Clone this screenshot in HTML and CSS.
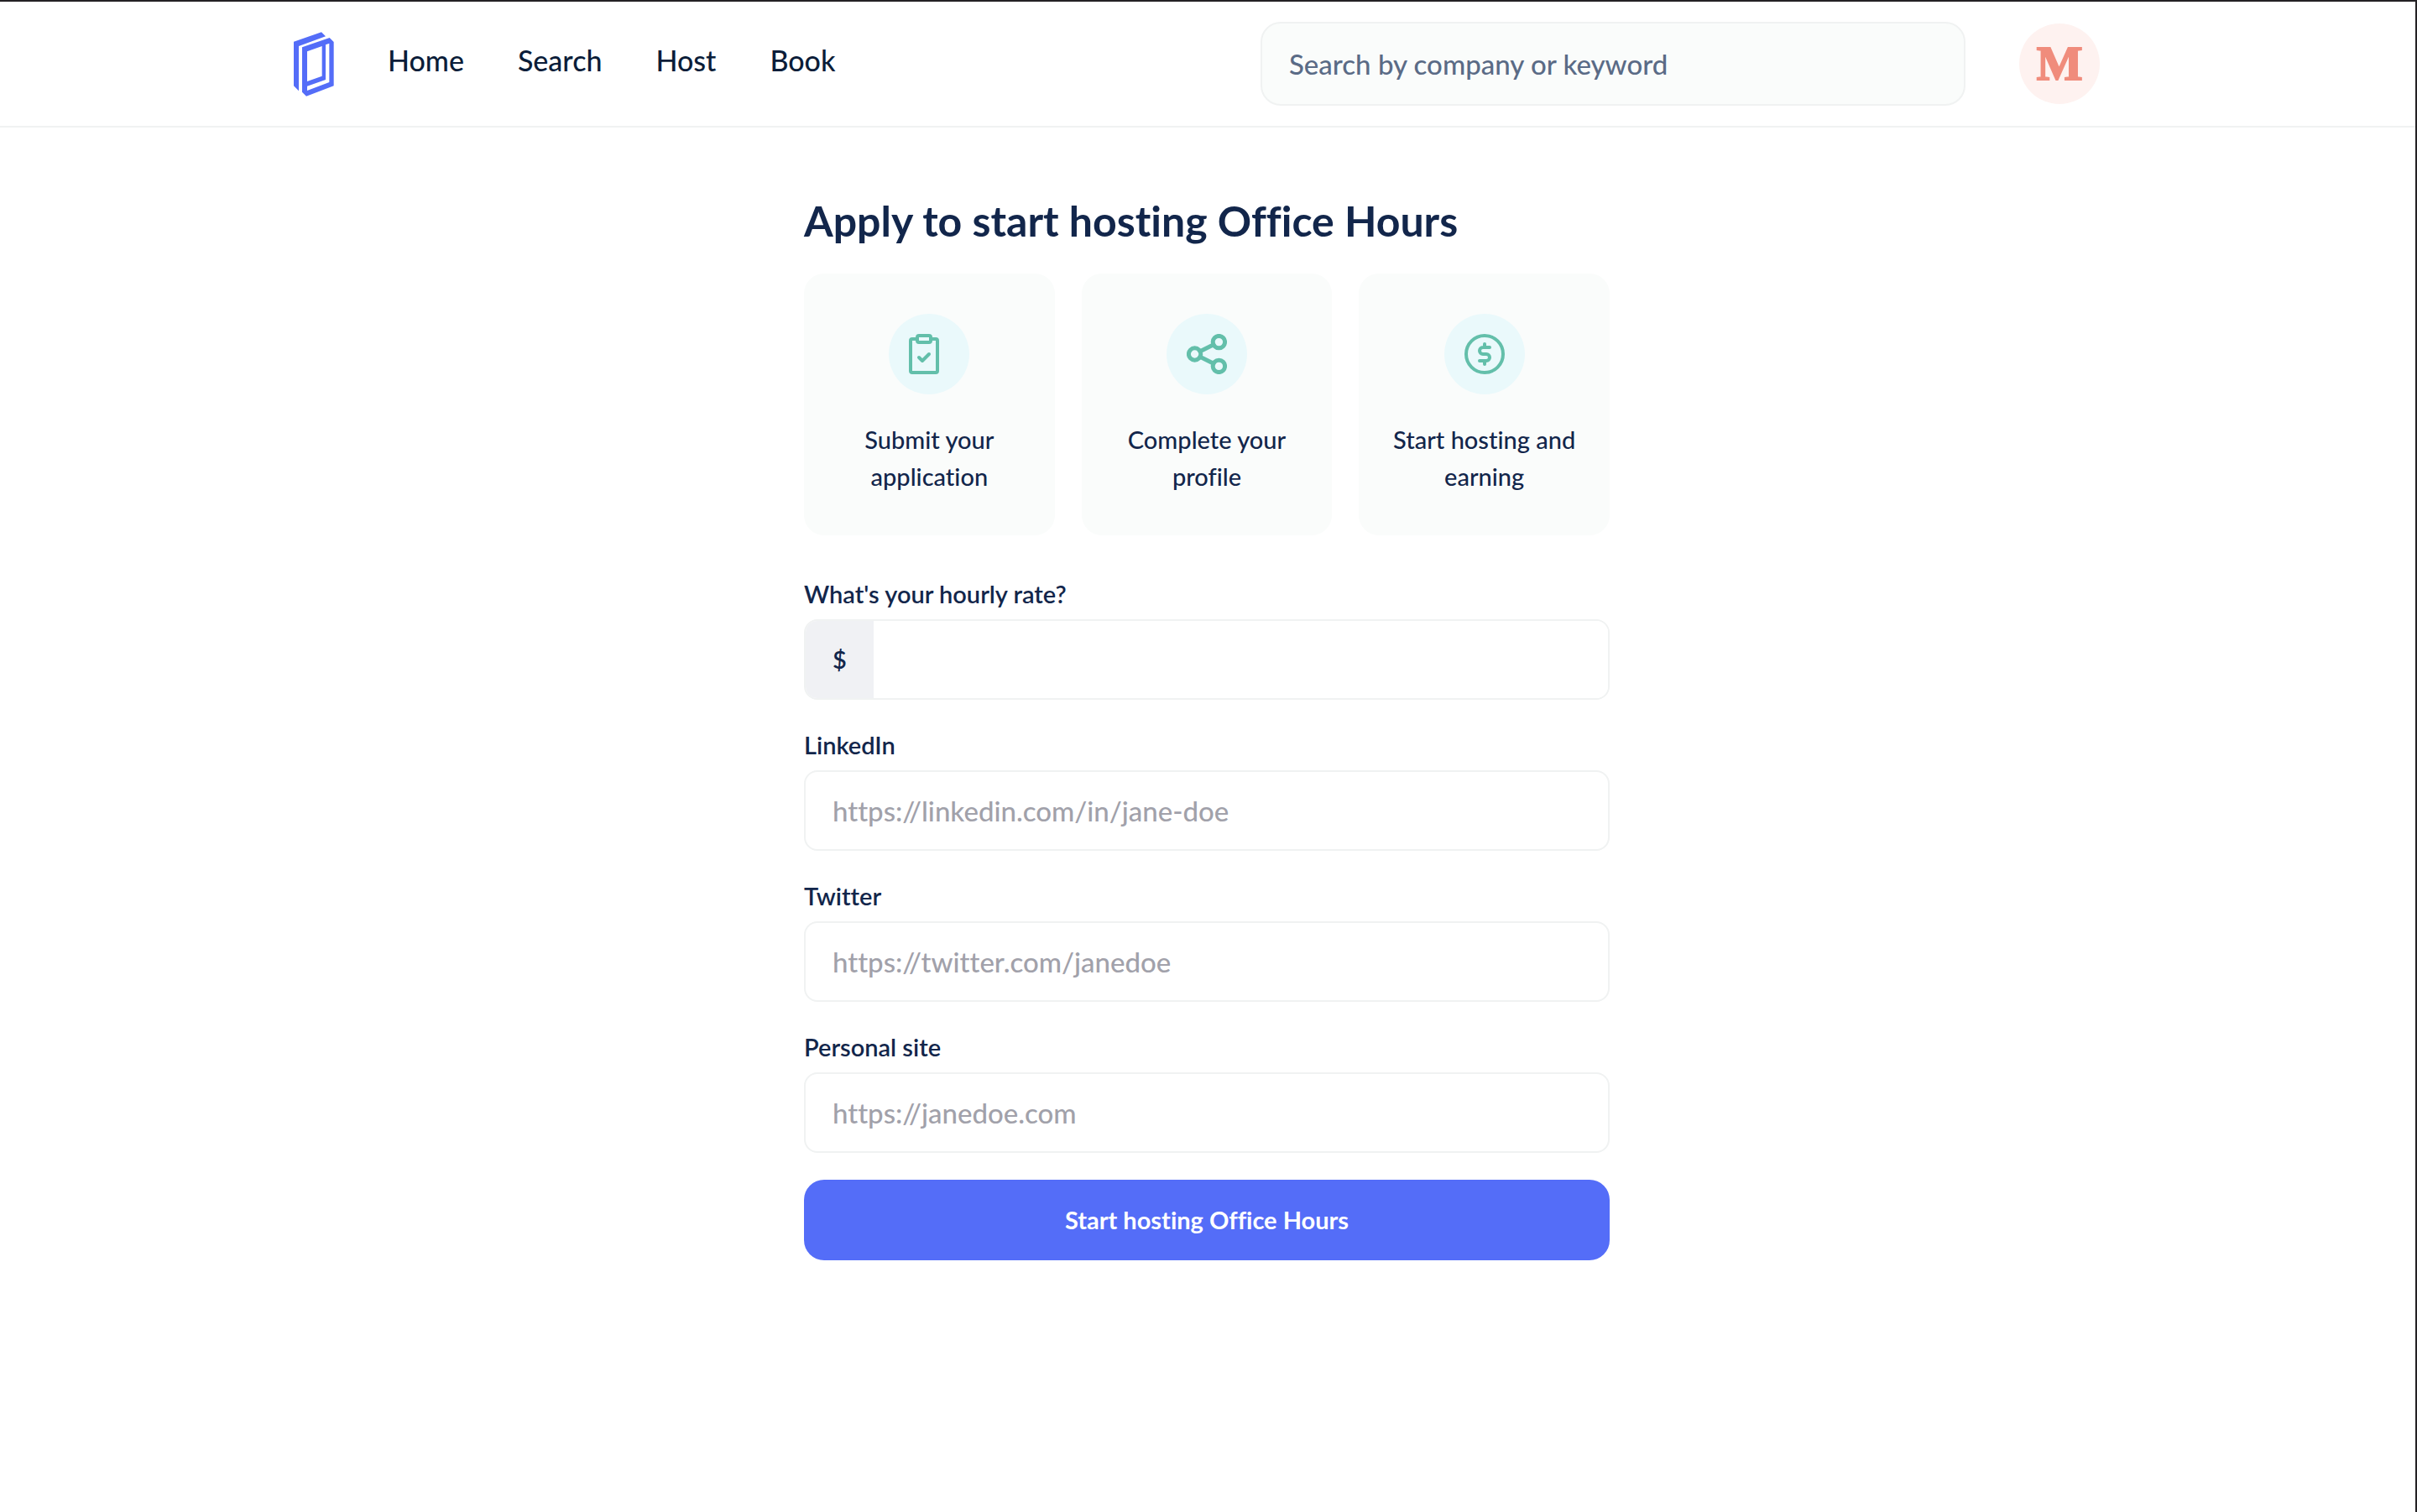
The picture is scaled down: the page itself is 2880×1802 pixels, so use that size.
FILE: index.html
```html
<!DOCTYPE html>
<html lang="en">
<head>
<meta charset="utf-8">
<meta name="viewport" content="width=device-width, initial-scale=1">
<title>Apply to start hosting Office Hours</title>
<link rel="stylesheet" href="styles.css">
</head>
<body>
<header class="site-header">
  <div class="header-inner">
    <a class="logo" href="#" aria-label="Office Hours">
      <svg viewBox="30 22 144 231" fill="currentColor" fill-rule="evenodd" aria-hidden="true">
        <path d="M30 57 129 23 144 38 48 73V233L30 215Z"/>
        <path d="M60 77 158 43 173 58V215L75 252 60 237ZM78 92V199L131 180V73ZM144 68V193L78 216V232L157 202V63Z"/>
      </svg>
    </a>
    <nav class="nav">
      <a href="#">Home</a>
      <a href="#">Search</a>
      <a href="#">Host</a>
      <a href="#">Book</a>
    </nav>
    <input class="search" type="search" placeholder="Search by company or keyword" aria-label="Search by company or keyword">
    <a class="avatar" href="#">M</a>
  </div>
</header>
<main class="page">
  <div class="column">
    <h1 class="title">Apply to start hosting Office Hours</h1>
    <ul class="steps">
      <li class="step">
        <span class="step-icon">
          <svg viewBox="0 0 48 48" aria-hidden="true">
            <path d="M10 6H4a2 2 0 0 0-2 2V44a2 2 0 0 0 2 2H32a2 2 0 0 0 2-2V8a2 2 0 0 0-2-2H26"/>
            <rect x="10" y="2" width="16" height="8" rx="2"/>
            <path d="M12 28 16 32 24 24"/>
          </svg>
        </span>
        <span class="step-text">Submit your application</span>
      </li>
      <li class="step">
        <span class="step-icon">
          <svg class="share" viewBox="0 0 48 48" aria-hidden="true">
            <circle cx="9.6" cy="24" r="7.2"/>
            <circle cx="38.4" cy="9.6" r="7.2"/>
            <circle cx="38.4" cy="38.4" r="7.2"/>
            <path d="M16 20.8 32 12.8M16 27.2 32 35.2"/>
          </svg>
        </span>
        <span class="step-text">Complete your profile</span>
      </li>
      <li class="step">
        <span class="step-icon">
          <svg viewBox="0 0 48 48" aria-hidden="true">
            <circle cx="24" cy="24" r="22"/>
            <path d="M30 16H22a4 4 0 0 0 0 8H26a4 4 0 0 1 0 8H18M24 12V16M24 32V36"/>
          </svg>
        </span>
        <span class="step-text">Start hosting and earning</span>
      </li>
    </ul>
    <form class="form">
      <div class="field">
        <label for="rate">What's your hourly rate?</label>
        <div class="money">
          <span class="prefix">$</span>
          <input id="rate" type="text" inputmode="decimal">
        </div>
      </div>
      <div class="field">
        <label for="linkedin">LinkedIn</label>
        <input class="box" id="linkedin" type="url" placeholder="https://linkedin.com/in/jane-doe">
      </div>
      <div class="field">
        <label for="twitter">Twitter</label>
        <input class="box" id="twitter" type="url" placeholder="https://twitter.com/janedoe">
      </div>
      <div class="field">
        <label for="site">Personal site</label>
        <input class="box" id="site" type="url" placeholder="https://janedoe.com">
      </div>
      <button class="submit" type="submit">Start hosting Office Hours</button>
    </form>
  </div>
</main>
</body>
</html>
```
FILE: styles.css
```css
:root {
  --navy: #12264b;
  --line: #f0f2f2;
  --surface: #fafcfb;
  --brand: #546df8;
}
* { box-sizing: border-box; }
body {
  margin: 0;
  min-height: 100vh;
  border-top: 2px solid #232124;
  border-right: 2px solid #232124;
  background: #fff;
  color: var(--navy);
  font-family: Lato, "Open Sans", sans-serif;
  font-size: 29px;
  font-variant-ligatures: none;
  font-weight: 500;
  line-height: 44px;
}
input, button { font: inherit; font-variant-ligatures: none; color: inherit; }
input { min-width: 0; outline: none; }

.site-header {
  padding: 24px 2px 24px 0;
  border-bottom: 2px solid var(--line);
}
.header-inner {
  display: flex;
  align-items: center;
  max-width: 2176px;
  margin: 0 auto;
  padding-right: 24px;
}
.logo { display: flex; color: var(--brand); }
.logo svg { width: 48px; height: 77px; }
.nav {
  display: flex;
  flex: 1;
  gap: 64px;
  margin-left: 64px;
  padding-bottom: 8px;
  font-size: 34px;
}
.nav a { color: #0b1d39; text-decoration: none; }
.search {
  width: 840px;
  height: 100px;
  padding: 0 32px;
  border: 2px solid var(--line);
  border-radius: 24px;
  background: var(--surface);
  font-size: 33px;
  appearance: none;
}
.search::placeholder { color: #5a6b86; }
.avatar {
  display: flex;
  align-items: center;
  justify-content: center;
  width: 96px;
  height: 96px;
  margin-left: 64px;
  border-radius: 50%;
  background: #fef2f0;
  color: #f08c7c;
  font: bold 58px/96px "Liberation Serif", serif;
  -webkit-text-stroke: 2px currentColor;
  text-decoration: none;
}

.page { padding: 80px 2px 80px 0; }
.column { max-width: 960px; margin: 0 auto; }
.title {
  margin: 0 0 32px;
  font-size: 50px;
  font-weight: 700;
  line-height: 62px;
}
.steps {
  display: grid;
  grid-template-columns: repeat(3, 1fr);
  gap: 32px;
  margin: 0;
  padding: 0;
  list-style: none;
}
.step {
  display: flex;
  flex-direction: column;
  align-items: center;
  gap: 32px;
  padding: 48px 32px;
  border-radius: 24px;
  background: var(--surface);
  text-align: center;
}
.step-icon {
  padding: 24px;
  border-radius: 50%;
  background: #eaf9fb;
}
.step-icon svg {
  display: block;
  width: 48px;
  height: 48px;
  fill: none;
  stroke: #63bfaa;
  stroke-width: 4;
  stroke-linecap: round;
  stroke-linejoin: round;
}
.step-icon .share { stroke-width: 5; }

.form { margin-top: 48px; }
.field {
  display: flex;
  flex-direction: column;
  gap: 8px;
  margin-bottom: 32px;
}
.field label { font-weight: 600; }
.money, .box {
  height: 96px;
  border: 2px solid var(--line);
  border-radius: 16px;
  background: #fff;
}
.box { padding: 0 32px; font-size: 33px; }
.box::placeholder { color: #a1a1aa; }
.money { display: flex; overflow: hidden; }
.prefix {
  display: flex;
  align-items: center;
  padding: 0 32px;
  background: #f0f1f4;
  font-weight: 600;
}
.money input { flex: 1; padding: 0 32px; border: 0; font-size: 33px; }
.submit {
  width: 100%;
  height: 96px;
  border: 0;
  border-radius: 24px;
  background: var(--brand);
  color: #fff;
  font-weight: 700;
}
```
